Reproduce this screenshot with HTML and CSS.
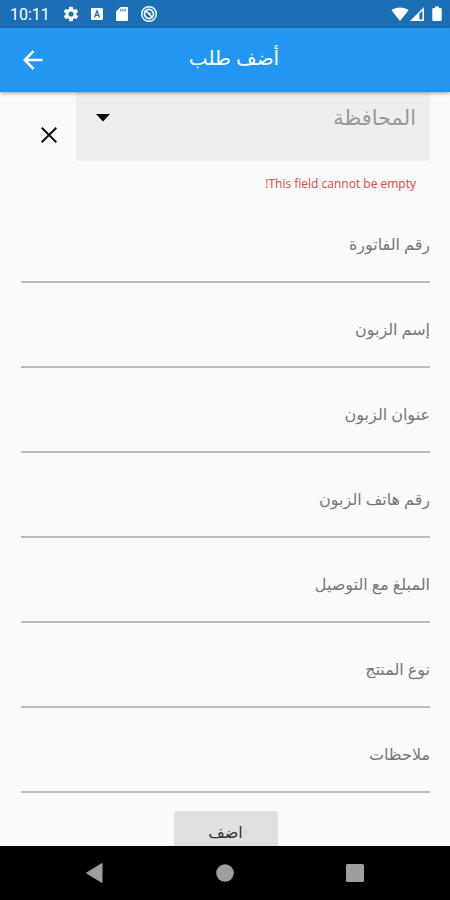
FILE: index.html
```html
<!DOCTYPE html>
<html lang="ar">
<head>
  <meta charset="UTF-8">
  <meta name="viewport" content="width=device-width, initial-scale=1.0">
  <title>أضف طلب</title>
  <link rel="stylesheet" href="styles.css">
</head>
<body>

  <!-- Status bar -->
  <div class="status-bar">
    <span class="time">10:11</span>
    <div class="status-icons">
      <svg width="16" height="16" viewBox="1 1 22 22" fill="currentColor"><path d="M19.400 13c0-.3.1-.6.1-1s0-.7-.1-1l2.100-1.600c.2-.2.3-.4.1-.7l-2-3.400c-.1-.2-.4-.3-.6-.2l-2.500 1c-.5-.4-1.100-.7-1.700-1l-.4-2.600c0-.3-.2-.5-.5-.5h-4c-.2 0-.4.2-.5.4l-.4 2.700c-.6.2-1.100.6-1.700 1l-2.400-1c-.3-.1-.5 0-.7.2l-2 3.400c-.1.3 0 .5.2.7L4.600 11c0 .3-.1.700-.1 1s0 .700.1 1l-2.200 1.600c-.2.2-.3.400-.1.700l2 3.400c.1.2.4.3.6.2l2.500-1c.5.4 1.100.700 1.700 1l.4 2.600c0 .3.2.5.5.5h4c.3 0 .5-.2.5-.5l.4-2.600c.6-.3 1.200-.6 1.700-1l2.500 1c.2.1.5 0 .6-.2l2-3.400c.1-.2.1-.5-.1-.7zM12 15.500a3.500 3.500 0 1 1 0-7 3.500 3.500 0 0 1 0 7z" fill-rule="evenodd"/></svg>
      <svg width="14" height="14" viewBox="0 0 14 14"><rect x="1" y="1" width="12" height="12" rx="1" fill="currentColor"/><path d="M4.500 10.500 7 3.800l2.500 6.700M5.300 8.300h3.400" fill="none" stroke="#1b6fb5" stroke-width="1.300"/></svg>
      <svg width="14" height="16" viewBox="0 0 14 16"><path d="M5.500 1H12a1 1 0 0 1 1 1v12a1 1 0 0 1-1 1H2a1 1 0 0 1-1-1V5.500z" fill="currentColor"/><path d="M5.800 3v2.500M8 3v2.500M10.200 3v2.500" stroke="#1b6fb5" stroke-width="1"/></svg>
      <svg width="18" height="18" viewBox="0 0 18 18" fill="none" stroke="currentColor"><circle cx="9" cy="9" r="7.300" stroke-width="1.400"/><path d="M5 5l8 8M6.500 5.200a4.600 4.600 0 0 1 6.300 6.300M5.200 6.500a4.600 4.600 0 0 0 6.300 6.300" stroke-width="1.700"/><path d="M9 8.200L10.500 9" stroke-width="1.500"/></svg>
    </div>
    <div class="signal-icons">
      <svg width="18" height="16" viewBox="0 0 18 16"><path d="M0.500 4.200C5 .5 13 .5 17.500 4.200L9 15z" fill="currentColor"/></svg>
      <svg width="16" height="16" viewBox="0 0 16 16"><path d="M15 1v14H1z" fill="currentColor"/><path d="M13.400 4.800v8.700h-3V7.800z" fill="#1b6fb5"/></svg>
      <svg class="battery" width="10" height="16" viewBox="0 0 10 16"><path d="M3 0.500h4V2h1.500A1.200 1.200 0 0 1 9.700 3.200v10.600a1.200 1.200 0 0 1-1.200 1.200h-7A1.200 1.200 0 0 1 .3 13.800V3.200A1.200 1.200 0 0 1 1.500 2H3z" fill="currentColor"/></svg>
    </div>
  </div>

  <!-- App bar -->
  <header class="app-bar">
    <button class="back" type="button" aria-label="رجوع">
      <svg width="20" height="20" viewBox="0 0 20 20" fill="none" stroke="currentColor" stroke-width="2.500"><path d="M19.500 10H2M10.500 1.200L1.800 10l8.700 8.800"/></svg>
    </button>
    <h1>أضف طلب</h1>
  </header>

  <!-- Order form -->
  <main>
    <form dir="rtl">
      <div class="province-row">
        <div class="province">
          <select id="province" aria-label="المحافظة" aria-describedby="province-error">
            <option>المحافظة</option>
          </select>
          <svg class="caret" width="14" height="8" viewBox="0 0 14 8"><path d="M0 0h14L7 7.500z"/></svg>
        </div>
        <button class="clear" type="button" aria-label="مسح">
          <svg width="16" height="16" viewBox="0 0 16 16" fill="none" stroke="currentColor" stroke-width="2"><path d="M0.700.7l14.600 14.600M15.300.7L.7 15.300"/></svg>
        </button>
      </div>
      <p class="error" id="province-error">This field cannot be empty!</p>

      <div class="field">
        <label for="invoice">رقم الفاتورة</label>
        <input id="invoice" type="text">
      </div>
      <div class="field">
        <label for="customer">إسم الزبون</label>
        <input id="customer" type="text">
      </div>
      <div class="field">
        <label for="address">عنوان الزبون</label>
        <input id="address" type="text">
      </div>
      <div class="field">
        <label for="phone">رقم هاتف الزبون</label>
        <input id="phone" type="tel">
      </div>
      <div class="field">
        <label for="amount">المبلغ مع التوصيل</label>
        <input id="amount" type="text">
      </div>
      <div class="field">
        <label for="product">نوع المنتج</label>
        <input id="product" type="text">
      </div>
      <div class="field">
        <label for="notes">ملاحظات</label>
        <input id="notes" type="text">
      </div>

      <button class="submit" type="submit">اضف</button>
    </form>
  </main>

  <!-- System navigation -->
  <nav>
    <button type="button" aria-label="Back"><svg width="20" height="20" viewBox="0 0 20 20"><path d="M17.500.8v18.400a.6.6 0 0 1-.9.5L1.500 10.600a.7.7 0 0 1 0-1.200L16.600.3a.6.6 0 0 1 .9.5z" fill="currentColor"/></svg></button>
    <button type="button" aria-label="Home"><svg width="20" height="20" viewBox="0 0 20 20"><circle cx="10" cy="10" r="8.800" fill="currentColor"/></svg></button>
    <button type="button" aria-label="Recent apps"><svg width="20" height="20" viewBox="0 0 20 20"><rect x="1" y="1" width="18" height="18" rx="1.500" fill="currentColor"/></svg></button>
  </nav>

</body>
</html>
```
FILE: styles.css
```css
* { margin: 0; padding: 0; box-sizing: border-box; }

body {
  height: 100vh;
  display: flex;
  flex-direction: column;
  background: #fafafa;
  font-family: Roboto, "DejaVu Sans", sans-serif;
}

button, input, select { font-family: inherit; border: none; background: none; }
button { cursor: pointer; }
svg { display: block; }

/* Status bar */
.status-bar {
  flex: none;
  display: flex; align-items: center;
  height: 28px; padding: 0 8px 0 10px;
  background: #1b6fb5; color: white;
}
.time { font-size: 16px; }
.status-icons { display: flex; align-items: center; gap: 11px; margin-left: 13px; }
.signal-icons { display: flex; align-items: center; margin-left: auto; }
.battery { margin-left: 7px; }

/* App bar */
.app-bar {
  flex: none;
  display: grid; grid-template-columns: 66px 1fr 48px; align-items: center;
  height: 64px;
  background: #2196f3; color: white;
  box-shadow: 0 1px 4px rgba(0, 0, 0, 0.4);
  z-index: 1;
}
.back { color: white; height: 64px; display: grid; place-items: center; }
.app-bar h1 { padding-bottom: 4px; font-size: 20px; font-weight: normal; text-align: center; }

/* Form */
main { flex: 1; min-height: 0; overflow: hidden; }
form { display: flex; flex-direction: column; padding: 0 20px 0 21px; }

.province-row { display: flex; }
.province { flex: 1; display: grid; align-items: start; }
.province select, .province .caret { grid-area: 1 / 1; }
.province select {
  appearance: none;
  width: 100%; height: 69px; padding: 0 14px 18px;
  background: #eee; color: #999;
  border-radius: 0 0 2px 2px;
  font-size: 21px;
}
.caret { justify-self: end; margin: 22px 0 0 20px; pointer-events: none; }
.clear { width: 55px; padding-top: 16px; display: grid; place-items: center; color: #111; }

.error {
  padding: 12px 14px 0;
  font-family: "Open Sans", sans-serif;
  font-size: 12px; line-height: 22px;
  color: #d9484a;
}

.field {
  display: flex; flex-direction: column; justify-content: flex-end;
  height: 85px;
  border-bottom: 2px solid #bdbdbd;
}
.error + .field { height: 88px; }
.field label { font-size: 16px; line-height: 24px; color: #777; }
.field input { height: 24px; width: 100%; outline: none; font-size: 16px; }

.submit {
  align-self: center;
  width: 104px; height: 42px; margin-top: 18px;
  background: #e0e0e0; color: #333;
  border-radius: 3px;
  font-size: 16px;
}

/* System navigation */
nav {
  flex: none;
  display: flex; justify-content: space-between; align-items: center;
  height: 54px; padding: 0 85px;
  background: black;
}
nav button { color: #9e9e9e; }
```
